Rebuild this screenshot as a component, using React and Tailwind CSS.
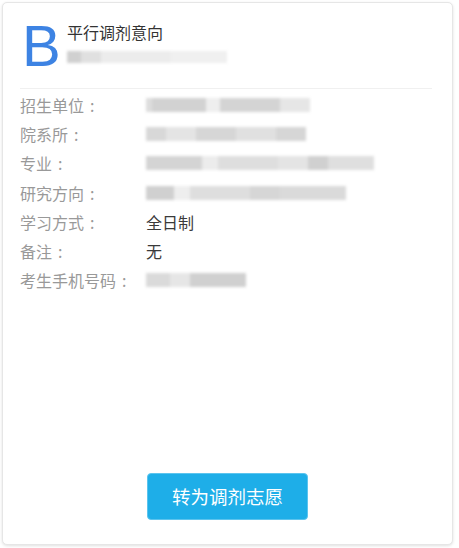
import React from "react";

const Blur = ({ segs, h = "h-[14px]" }) => (
  <div className="flex items-center blur-[1.5px]">
    {segs.map(([w, c], i) => (
      <div key={i} className={`${h}`} style={{ width: w, background: c }} />
    ))}
  </div>
);

const rows = [
  { label: "招生单位", blur: [[6, "#ddd"], [54, "#d2d2d2"], [14, "#eee"], [60, "#d4d4d4"], [30, "#e6e6e6"]] },
  { label: "院系所", blur: [[20, "#d8d8d8"], [30, "#e4e4e4"], [40, "#d6d6d6"], [40, "#e0e0e0"], [30, "#d6d6d6"]] },
  { label: "专业", blur: [[56, "#d4d4d4"], [16, "#ececec"], [60, "#dedede"], [30, "#e4e4e4"], [20, "#d0d0d0"], [46, "#dfdfdf"]] },
  { label: "研究方向", blur: [[28, "#d0d0d0"], [16, "#eeeeee"], [60, "#dedede"], [30, "#d6d6d6"], [66, "#dadada"]] },
  { label: "学习方式", text: "全日制" },
  { label: "备注", text: "无" },
  { label: "考生手机号码", blur: [[24, "#dadada"], [20, "#e6e6e6"], [56, "#d0d0d0"]] },
];

export default function App() {
  return (
    <div
      className="w-[459px] h-[548px] bg-white pt-[2px] pl-[2px] pr-[6px] pb-[3px]"
      style={{ fontFamily: '"Noto Sans CJK SC", "Noto Sans", sans-serif' }}
    >
      <div className="h-full rounded-[5px] border border-[#e6e6e6] shadow-[0_1px_3px_rgba(0,0,0,0.12)] bg-white flex flex-col">
        <div className="flex items-start pl-[19px] pt-[13px]">
          <div
            className="text-[58px] leading-[60px] text-[#3d83e3] w-[46px]"
            style={{ fontFamily: '"Liberation Sans", Arial, sans-serif' }}
          >
            B
          </div>
          <div className="flex flex-col pt-[5px] -ml-[1px]">
            <div className="text-[16px] leading-[22px] text-[#333]">平行调剂意向</div>
            <div className="mt-[8px]">
              <Blur segs={[[14, "#d0d0d0"], [20, "#e0e0e0"], [70, "#ececec"], [56, "#f0f0f0"]]} h="h-[12px]" />
            </div>
          </div>
        </div>
        <div className="ml-[17px] mr-[20px] mt-[12px] h-px bg-[#f0f0f0]" />
        <div className="flex flex-col pl-[17px] pt-[1px]">
          {rows.map((r) => (
            <div key={r.label} className="flex items-center h-[29.3px]">
              <div className="w-[126px] text-[16px] text-[#999] whitespace-nowrap">
                {r.label}
                <span className="ml-[6px]">:</span>
              </div>
              {r.text ? (
                <div className="text-[16px] text-[#3a3a3a]">{r.text}</div>
              ) : (
                <Blur segs={r.blur} />
              )}
            </div>
          ))}
        </div>
        <div className="flex-1" />
        <div className="pl-[144px] pb-[24px]">
          <button className="w-[161px] h-[47px] rounded-[4px] bg-[#1eaee8] text-white text-[18.5px] border border-[#5cc4ee]">
            转为调剂志愿
          </button>
        </div>
      </div>
    </div>
  );
}
